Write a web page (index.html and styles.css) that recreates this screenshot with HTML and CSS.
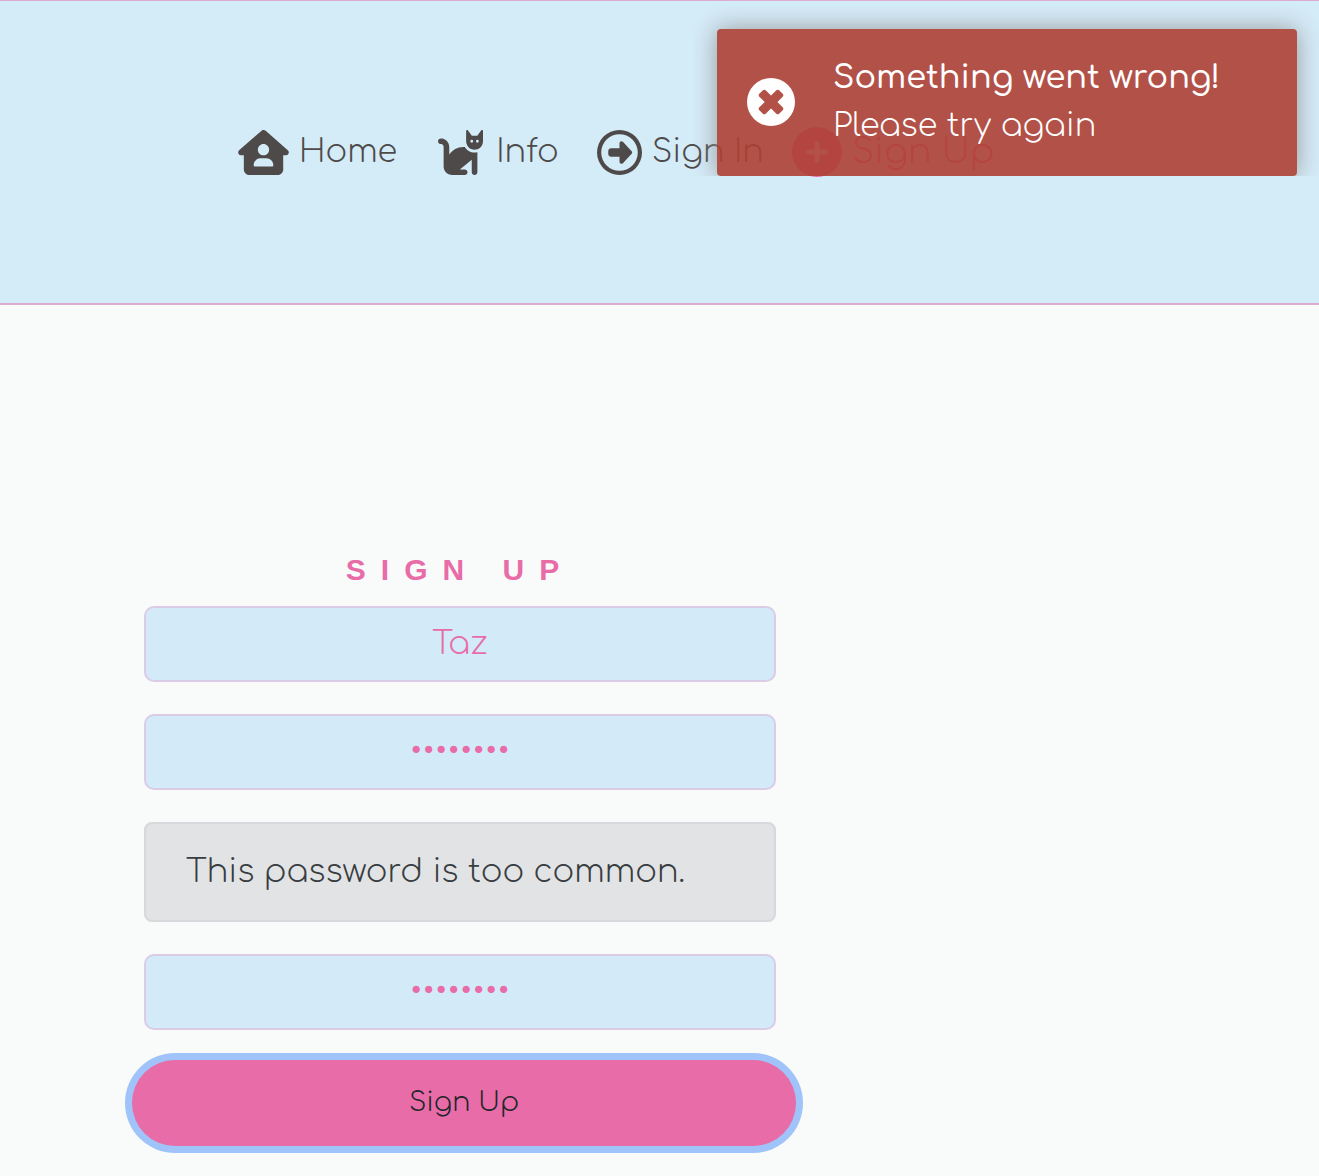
FILE: index.html
```html
<!DOCTYPE html>
<html lang="en">
<head>
  <meta charset="utf-8">
  <meta name="viewport" content="width=device-width, initial-scale=1">
  <title>Sign Up</title>
  <link rel="stylesheet" href="styles.css">
</head>
<body>
  <header class="site-header">
    <nav class="nav" aria-label="Main">
      <a class="nav-link" href="#home">
        <svg class="nav-icon nav-icon-wide" viewBox="0 0 576 512" aria-hidden="true"><path d="M575.8 255.5c0 18-15 32.1-32 32.1h-32l.7 160.2c.2 35.5-28.5 64.3-64 64.3H128.1c-35.3 0-64-28.7-64-64V287.6H32c-18 0-32-14-32-32.1c0-9 3-17 10-24L266.4 8c7-7 15-8 22-8s15 2 21 7L564.8 231.5c8 7 12 15 11 24zM352 224c0-35.3-28.7-64-64-64s-64 28.7-64 64s28.7 64 64 64s64-28.7 64-64zm-96 96c-44.2 0-80 35.8-80 80c0 8.8 7.2 16 16 16H384c8.8 0 16-7.2 16-16c0-44.2-35.8-80-80-80H256z"/></svg>
        <span>Home</span>
      </a>
      <a class="nav-link" href="#info">
        <svg class="nav-icon nav-icon-wide" viewBox="0 0 576 512" aria-hidden="true"><path d="M320 192h17.1c22.1 38.3 63.5 64 110.9 64c11 0 21.8-1.4 32-4V480c0 17.7-14.3 32-32 32s-32-14.3-32-32V339.2L280 448h56c17.7 0 32 14.3 32 32s-14.3 32-32 32H192c-53 0-96-43-96-96V192.500c0-16.100-12-29.800-28-31.800l-7.900-1c-17.500-2.200-30-18.200-27.800-35.700s18.200-30 35.700-27.800l7.900 1c48 6 84.100 46.800 84.100 95.300v85.300c34.400-51.700 93.200-85.800 160-85.800zM480 218.500c-10 3.500-20.800 5.500-32 5.500c-28.400 0-54-12.400-71.600-32c-3.700-4.100-7-8.500-9.900-13.200C357.300 164 352 146.600 352 128V10.700C352 4.800 356.700.1 362.700 0h.2c3.300 0 6.400 1.600 8.400 4.200L384 21.300l27.200 36.300L416 64h64l4.800-6.400L512 21.300 524.800 4.200c2-2.600 5.100-4.200 8.400-4.200h.2C539.300.1 544 4.800 544 10.700V128c0 17.300-4.600 33.600-12.600 47.600c-11.300 19.800-29.600 35.200-51.400 42.900zM432 128a16 16 0 1 0-32 0 16 16 0 1 0 32 0zm48 16a16 16 0 1 0 0-32 16 16 0 1 0 0 32z"/></svg>
        <span>Info</span>
      </a>
      <a class="nav-link" href="#signin">
        <svg class="nav-icon" viewBox="0 0 512 512" aria-hidden="true"><path d="M464 256A208 208 0 1 1 48 256a208 208 0 1 1 416 0zM0 256a256 256 0 1 0 512 0A256 256 0 1 0 0 256zM294.600 135.100l99.900 107.100c3.500 3.800 5.500 8.700 5.500 13.800s-2 10.100-5.500 13.800L294.600 376.900c-4.200 4.500-10.100 7.100-16.300 7.100C266 384 256 374 256 361.700V304H160c-17.700 0-32-14.300-32-32V240c0-17.700 14.300-32 32-32h96V150.300C256 138 266 128 278.300 128c6.200 0 12.100 2.600 16.300 7.100z"/></svg>
        <span>Sign In</span>
      </a>
      <a class="nav-link nav-link-active" href="#signup" aria-current="page">
        <svg class="nav-icon" viewBox="0 0 512 512" aria-hidden="true"><path fill-rule="evenodd" d="M256 512A256 256 0 1 0 256 0a256 256 0 1 0 0 512zM232 344V280H168c-13.300 0-24-10.700-24-24s10.700-24 24-24h64V168c0-13.300 10.700-24 24-24s24 10.700 24 24v64h64c13.300 0 24 10.700 24 24s-10.700 24-24 24H280v64c0 13.300-10.700 24-24 24s-24-10.700-24-24z"/></svg>
        <span>Sign Up</span>
      </a>
    </nav>
  </header>

  <main class="page">
    <form class="signup">
      <h1 class="signup-title">Sign Up</h1>
      <input class="field" type="text" aria-label="Username" value="Taz">
      <input class="field" type="password" aria-label="Password" value="tazcat12">
      <p class="alert" role="alert">This password is too common.</p>
      <input class="field" type="password" aria-label="Confirm password" value="tazcat12">
      <button class="submit" type="button">Sign Up</button>
    </form>
  </main>

  <div class="toast-area">
    <div class="toast" role="alert">
      <svg class="toast-icon" viewBox="0 0 48 48" aria-hidden="true">
        <circle cx="24" cy="24" r="24" fill="#fff"/>
        <g fill="#b25148" transform="rotate(45 24 24)">
          <rect x="10" y="19.500" width="28" height="9" rx="2"/>
          <rect x="19.500" y="10" width="9" height="28" rx="2"/>
        </g>
      </svg>
      <div class="toast-text">
        <strong class="toast-title">Something went wrong!</strong>
        <span>Please try again</span>
      </div>
    </div>
  </div>
</body>
</html>
```

FILE: styles.css
```css
* {
  box-sizing: border-box;
}

body {
  margin: 0;
  background: #f9fbfa;
  color: #4e4a4a;
  font-family: Comfortaa, Lato, sans-serif;
  font-size: 32px;
  font-weight: 300;
  line-height: 48px;
}

.site-header {
  display: flex;
  align-items: center;
  min-height: 305px;
  padding: 0 24px 0 238px;
  background: #d4ebf8;
  border-top: 1px solid #deabd1;
  border-bottom: 2px solid #deabd1;
}

.nav {
  display: flex;
  align-items: center;
  gap: 38px;
}

.nav-link {
  display: flex;
  align-items: center;
  gap: 10px;
  color: inherit;
  text-decoration: none;
  white-space: nowrap;
}

.nav-link-active {
  margin-left: -10px;
  color: #e86ca8;
  font-size: 35px;
}

.nav-icon {
  width: 45px;
  height: 45px;
  fill: currentColor;
}

.nav-icon-wide {
  width: 51px;
}

.nav-link-active .nav-icon {
  width: 50px;
  height: 50px;
}

.page {
  padding: 241px 24px 24px 144px;
}

.signup {
  display: flex;
  flex-direction: column;
  gap: 32px;
  max-width: 632px;
}

.signup-title {
  margin: 0 0 -20px;
  color: #e86ca8;
  font-family: "Liberation Sans", Arial, sans-serif;
  font-size: 30px;
  font-weight: 700;
  letter-spacing: 15px;
  line-height: 48px;
  text-align: center;
  text-transform: uppercase;
}

.field {
  width: 100%;
  height: 76px;
  padding: 0 24px 2px;
  background: #d3eaf8;
  border: 2px solid #dccbe7;
  border-radius: 10px;
  color: #e86ca8;
  font: inherit;
  text-align: center;
}

.alert {
  margin: 0;
  padding: 24px 40px;
  background: #e2e3e5;
  border: 2px solid #d6d8db;
  border-radius: 8px;
  color: #383d41;
}

.submit {
  height: 86px;
  margin: -2px -20px 0 -12px;
  padding: 0 24px 2px;
  background: #e86ca8;
  border: 0;
  border-radius: 43px;
  box-shadow: 0 0 0 7px #a0c3fa;
  color: #212529;
  font: inherit;
  font-size: 27px;
}

/* The notification floats over the header; its shadow is clipped below. */
.toast-area {
  position: absolute;
  top: 0;
  right: 0;
  padding: 29px 22px 0 24px;
  overflow: hidden;
}

.toast {
  display: flex;
  align-items: center;
  gap: 38px;
  width: 580px;
  max-width: 100%;
  min-height: 147px;
  padding: 24px 30px 26px;
  background: rgba(174, 64, 52, 0.9);
  border-radius: 4px;
  box-shadow: 0 0 24px #999;
  color: #fff;
}

.toast-icon {
  flex: none;
  width: 48px;
  height: 48px;
}

.toast-text {
  display: flex;
  flex-direction: column;
}

.toast-title {
  font-weight: 500;
}
```
